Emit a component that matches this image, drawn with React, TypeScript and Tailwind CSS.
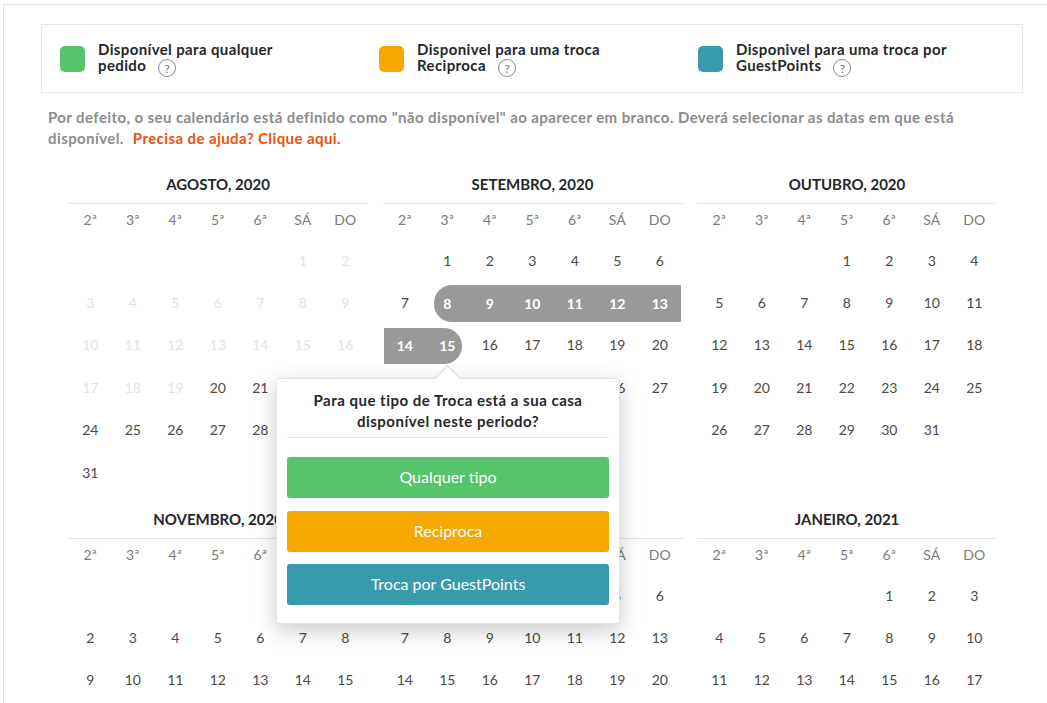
const weekdays = ["2ª", "3ª", "4ª", "5ª", "6ª", "SÁ", "DO"];

type Month = { title: string; offset: number; days: number; fadedUntil?: number; band?: number[] };

const months: Month[] = [
  { title: "AGOSTO, 2020", offset: 5, days: 31, fadedUntil: 19 },
  { title: "SETEMBRO, 2020", offset: 1, days: 30, band: [8, 9, 10, 11, 12, 13, 14, 15] },
  { title: "OUTUBRO, 2020", offset: 3, days: 31 },
  { title: "NOVEMBRO, 2020", offset: 6, days: 30 },
  { title: "DEZEMBRO, 2020", offset: 1, days: 31 },
  { title: "JANEIRO, 2021", offset: 4, days: 31 },
];

function DayCell({ day, month }: { day: number; month: Month }) {
  const faded = month.fadedUntil !== undefined && day <= month.fadedUntil;
  const inBand = month.band?.includes(day);

  if (inBand) {
    const isStart = day === 8;
    const isEnd = day === 15;
    return (
      <div className="h-[42.4px] flex items-center">
        <div
          className={`h-[36.5px] w-full flex items-center bg-[#999999] font-bold text-white pb-[1px] ${isStart ? "ml-[8px] rounded-l-[18px]" : ""} ${isEnd ? "mr-[7px] pl-[7px] rounded-r-[18px]" : ""}`}
        >
          <span className={isStart ? "w-[26.5px] text-center" : "w-full text-center"}>{day}</span>
        </div>
      </div>
    );
  }

  return (
    <div className={`h-[42.4px] pb-[2px] flex items-center justify-center ${faded ? "text-[#e3e3e3]" : "text-[#4a4a4a]"}`}>
      {day}
    </div>
  );
}

function MonthCalendar({ month }: { month: Month }) {
  return (
    <div className="mb-[12.6px]">
      <div className="h-[32px] pb-[7px] border-b border-[#e4e4e4] text-center text-[15px] leading-[24px] font-bold text-[#25272b]">
        {month.title}
      </div>
      <div className="grid grid-cols-[repeat(7,42.5px)] pl-px text-[14px] text-[#444444]">
        {weekdays.map((w) => (
          <div key={w} className="h-[31px] mb-[5px] flex items-center justify-center text-[#7a7a7a]">
            {w}
          </div>
        ))}
        {Array.from({ length: month.offset }).map((_, i) => (
          <div key={`e${i}`} />
        ))}
        {Array.from({ length: month.days }).map((_, i) => (
          <DayCell key={i} day={i + 1} month={month} />
        ))}
      </div>
    </div>
  );
}

function Help() {
  return (
    <span className="inline-flex align-[-2px] ml-[12px] w-[18px] h-[18px] rounded-full border border-[#888888] items-center justify-center text-[11px] leading-none font-normal tracking-normal text-[#666666]">
      ?
    </span>
  );
}

function LegendItem({ color, line1, line2 }: { color: string; line1: string; line2: string }) {
  return (
    <div className="flex items-center gap-[13px]">
      <div className={`w-[25px] h-[26px] rounded-[5px] shrink-0 ${color}`} />
      <div className="text-[15px] leading-[16px] font-bold text-[#25272b] tracking-[0.37px]">
        <div className="mt-[1px]">{line1}</div>
        {line2}
        <Help />
      </div>
    </div>
  );
}

export default function App() {
  return (
    <div className="relative h-[703px] w-[1047px] overflow-hidden bg-white font-['Lato','Liberation_Sans',sans-serif]">
      <div className="ml-[3px] mt-[4px] h-[699px] border-l border-t border-[#e4e4e4] pt-[19px] pl-[37px]">
        {/* Legend */}
        <div className="w-[982px] h-[69px] border border-[#e8e8e8] pl-[18px] grid grid-cols-[319px_319px_1fr] items-center">
          <LegendItem color="bg-[#55c46a]" line1="Disponível para qualquer" line2="pedido" />
          <LegendItem color="bg-[#f7a800]" line1="Disponivel para uma troca" line2="Reciproca" />
          <LegendItem color="bg-[#389bab]" line1="Disponivel para uma troca por" line2="GuestPoints" />
        </div>

        <p className="ml-[7px] mt-[14px] w-[930px] text-[15px] leading-[21px] font-bold text-[#8c8c8c] tracking-[0.41px]">
          Por defeito, o seu calendário está definido como "não disponível" ao aparecer em branco. Deverá selecionar as datas em que está disponível.
          <span className="ml-[9px] text-[#e9540d]">Precisa de ajuda? Clique aqui.</span>
        </p>

        <div className="ml-[27px] mt-[23px] w-[929px] grid grid-cols-3 gap-x-[14.5px]">
          {months.map((m) => (
            <MonthCalendar key={m.title} month={m} />
          ))}
        </div>
      </div>

      {/* Popover */}
      <div className="absolute left-[276px] top-[378px] w-[344px] h-[246px] bg-white border border-[#e2e2e2] rounded-[3px] px-[10px] shadow-[0_6px_22px_rgba(0,0,0,0.22)]">
        <div className="absolute left-[161px] -top-[10px] w-[19px] h-[19px] rotate-45 bg-white border-l border-t border-[#d8d8d8]" />
        <div className="relative h-[59px] border-b border-[#e2e2e2] pt-[11px] text-center text-[15px] leading-[21px] font-bold text-[#25272b] tracking-[0.5px]">
          Para que tipo de Troca está a sua casa
          <br />
          disponível neste periodo?
        </div>
        <div className="mt-[19px] flex flex-col text-[16px] text-white">
          <button className="h-[41px] pb-[2px] rounded-[3px] bg-[#55c46a] mb-[13px]">Qualquer tipo</button>
          <button className="h-[41px] pb-[2px] rounded-[3px] bg-[#f7a800] mb-[12px]">Reciproca</button>
          <button className="h-[41px] pb-[2px] rounded-[3px] bg-[#389bab]">Troca por GuestPoints</button>
        </div>
      </div>
    </div>
  );
}
